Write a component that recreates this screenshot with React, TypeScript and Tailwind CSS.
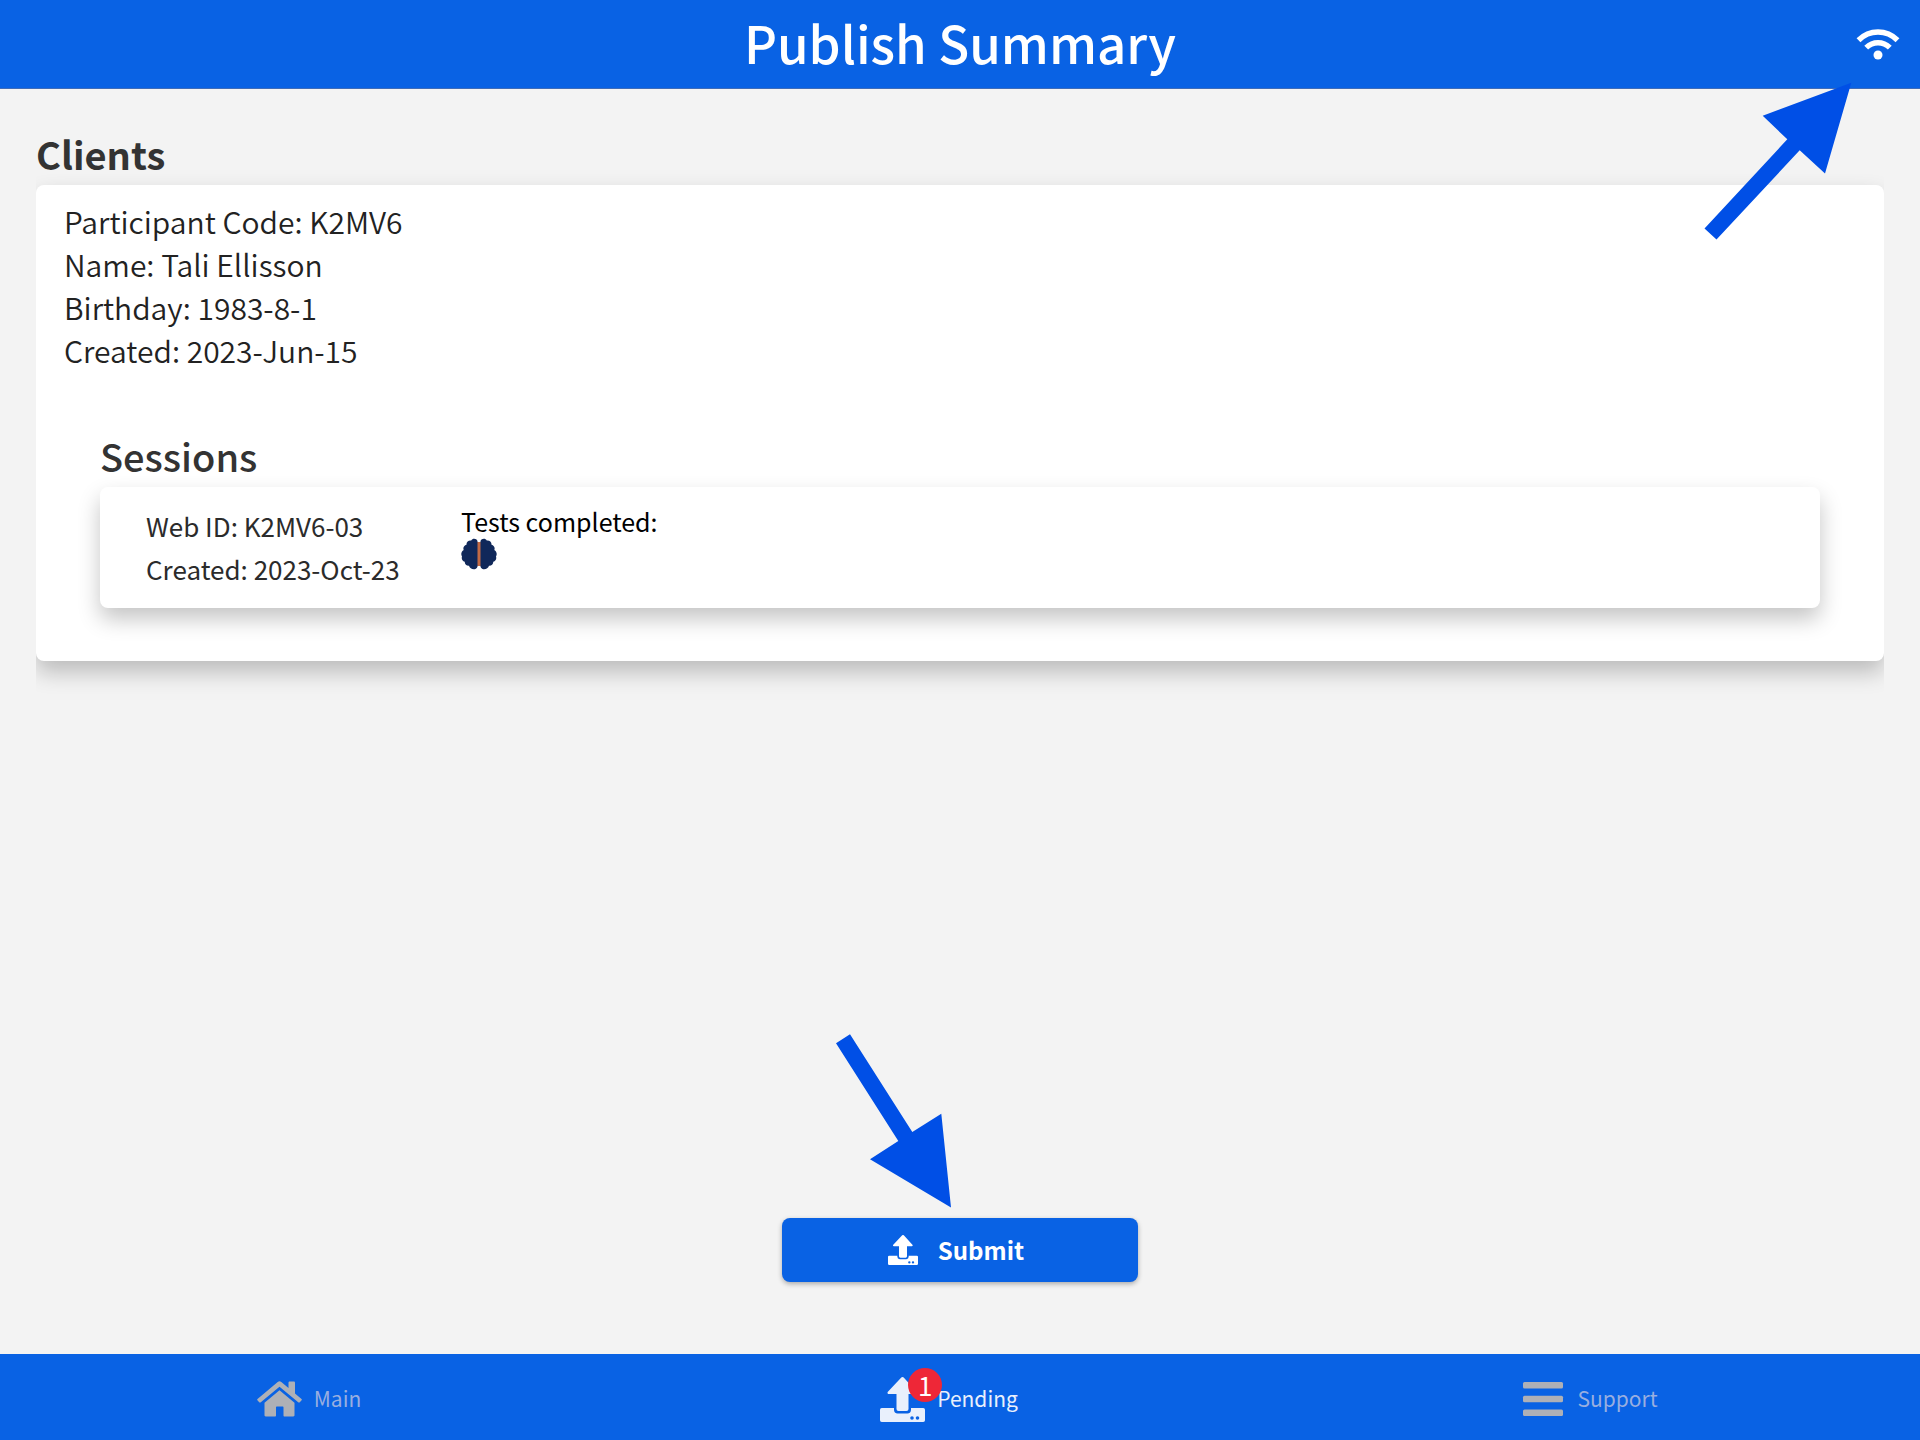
import React from "react";

interface Client {
  code: string;
  name: string;
  birthday: string;
  created: string;
}

interface Session {
  webId: string;
  created: string;
}

const CLIENT: Client = {
  code: "K2MV6",
  name: "Tali Ellisson",
  birthday: "1983-8-1",
  created: "2023-Jun-15",
};

const SESSIONS: Session[] = [{ webId: "K2MV6-03", created: "2023-Oct-23" }];

const cardShadow = "shadow-[0_11px_22px_rgba(0,0,0,0.23)]";

const WifiIcon = () => (
  <svg viewBox="0 0 44 32" className="w-11 h-8" fill="none" stroke="currentColor" strokeWidth="5.5" aria-hidden="true">
    <path d="M2.5 12.2C13.500 1.300 30.500 1.300 41.500 12.200" />
    <path d="M10.200 19.600C17 13 27 13 33.800 19.600" />
    <circle cx="22" cy="27" r="4.500" fill="currentColor" stroke="none" />
  </svg>
);

const UploadIcon = ({ className }: { className: string }) => (
  <svg viewBox="0 0 45 45" className={className} fill="currentColor" aria-hidden="true">
    <path d="M22.500 0a1.600 1.600 0 0 1 1.200.5L36.600 14.700c.9 1 .3 2.300-1 2.300H28.500V32a2 2 0 0 1-2 2h-8a2 2 0 0 1-2-2V17H8.900c-1.300 0-1.900-1.300-1-2.300L21.300.5A1.600 1.600 0 0 1 22.500 0Z" />
    <path
      fillRule="evenodd"
      d="M1.800 31H14v1.800a3.700 3.700 0 0 0 3.700 3.700h9.600a3.700 3.700 0 0 0 3.700-3.700V31h12.200A1.800 1.800 0 0 1 45 32.800v10.400a1.800 1.800 0 0 1-1.800 1.800H1.800A1.800 1.800 0 0 1 0 43.200V32.800A1.800 1.800 0 0 1 1.800 31ZM32 39.200a1.800 1.800 0 1 0 0 3.600 1.800 1.800 0 0 0 0-3.600Zm5.500 0a1.800 1.800 0 1 0 0 3.600 1.800 1.800 0 0 0 0-3.600Z"
    />
  </svg>
);

const HomeIcon = () => (
  <svg viewBox="0 0 45 36" className="w-[45px] h-9" fill="currentColor" aria-hidden="true">
    <path d="M20.700.9a2.800 2.800 0 0 1 3.600 0L31.500 7V1.700C31.500 1 32 .5 32.700.5h4.100c.7 0 1.200.5 1.200 1.200v10.800l6.500 5.400c.4.400.5.900.1 1.300l-1.800 2.100c-.4.400-.9.400-1.300.1L22.500 5.800 3.500 21.400c-.4.300-1 .3-1.300-.1L.4 19.200c-.4-.4-.3-1 .1-1.300Z" />
    <path d="M22.500 9.300 37.500 21.700V34.300c0 .7-.5 1.200-1.200 1.200H27.500c-.6 0-1-.4-1-1V26.500c0-.6-.4-1-1-1h-5.500c-.6 0-1 .4-1 1v8c0 .6-.4 1-1 1H8.700c-.7 0-1.200-.5-1.200-1.200V21.700Z" />
  </svg>
);

const MenuIcon = () => (
  <svg viewBox="0 0 45 36" className="w-[45px] h-9" fill="currentColor" aria-hidden="true">
    <rect x="3" y="1" width="40" height="6.500" rx="1.500" />
    <rect x="3" y="14.700" width="40" height="6.500" rx="1.500" />
    <rect x="3" y="28.500" width="40" height="6.500" rx="1.500" />
  </svg>
);

const BrainIcon = () => (
  <svg viewBox="0 0 36 32" className="w-9 h-8" aria-label="Brain test" role="img">
    <rect x="15.500" y="4" width="5" height="24" fill="#c26a45" />
    <path
      fill="#10285a"
      d="M16.500 3C15.500.2 11.500-.2 10.200 2.600 7.500 2.200 5.200 4.200 5.500 6.800 3 7.500 1.700 9.800 2.700 12 .3 13.500-.4 16.300 1 18.500c-.8 2.400.3 4.600 2.700 5.200.1 2.600 2 4.200 4.300 4C9 31.300 14.500 33.200 16.500 28.700Z"
    />
    <path
      fill="#10285a"
      d="M19.500 3C20.500.2 24.500-.2 25.800 2.600c2.700-.4 5 1.600 4.700 4.200 2.500.7 3.800 3 2.800 5.200 2.400 1.500 3.100 4.300 1.700 6.500.8 2.400-.3 4.600-2.700 5.200-.1 2.600-2 4.200-4.300 4C27 31.300 21.500 33.200 19.500 28.700Z"
    />
  </svg>
);

const SessionCard = ({ session }: { session: Session }) => (
  <article className={`flex rounded-lg bg-white pl-[46px] pt-[17px] pb-[18px] text-[#2b2b2b] ${cardShadow}`}>
    <div className="w-[315px] text-[26px] leading-[43px]">
      <p>Web ID: {session.webId}</p>
      <p>Created: {session.created}</p>
    </div>
    <div className="text-[25px] leading-[34px] text-black">
      <p>Tests completed:</p>
      <BrainIcon />
    </div>
  </article>
);

const App: React.FC = () => {
  return (
    <div className="relative flex min-h-screen flex-col overflow-hidden bg-[#f3f3f3] font-['Noto_Sans_CJK_SC','Noto_Sans',sans-serif]">
      <header className="relative flex h-[89px] items-center justify-center border-b border-[#3f6cb8] bg-[#0962e4] text-white">
        <h1 className="pb-1 text-[51px] font-medium leading-[72px]">Publish Summary</h1>
        <span className="absolute right-5 top-7">
          <WifiIcon />
        </span>
      </header>

      <main className="flex flex-1 flex-col">
        <section className="mx-9 overflow-hidden pt-[43px] pb-12">
          <h2 className="pb-2.5 text-[38px] font-bold leading-[43px] text-[#333]">Clients</h2>
          <div className={`rounded-lg bg-white pb-[53px] pt-[15px] ${cardShadow}`}>
            <div className="pl-7 text-[30px] font-[350] leading-[43px] text-[#222]">
              <p>Participant Code: {CLIENT.code}</p>
              <p>Name: {CLIENT.name}</p>
              <p>Birthday: {CLIENT.birthday}</p>
              <p>Created: {CLIENT.created}</p>
            </div>
            <div className="mx-16 pt-[61px]">
              <h3 className="pb-2 text-[38px] font-medium leading-[46px] text-[#333]">Sessions</h3>
              {SESSIONS.map((s) => (
                <SessionCard key={s.webId} session={s} />
              ))}
            </div>
          </div>
        </section>

        <div className="relative mx-auto mt-auto mb-[72px] w-[356px]">
          <button
            type="button"
            className="flex h-16 w-full items-center justify-center gap-5 rounded-lg bg-[#0962e4] pr-2 text-[24px] font-semibold text-white shadow-[0_2px_5px_rgba(0,0,0,0.3)]"
          >
            <UploadIcon className="h-[30px] w-[30px]" />
            Submit
          </button>
          {/* pointer to the submit button */}
          <svg
            viewBox="0 0 120 180"
            className="pointer-events-none absolute bottom-[70px] left-[50px] h-[180px] w-[120px]"
            aria-hidden="true"
          >
            <path fill="#004fe6" d="M119 175.500 109.300 81.700 80.300 100 18 2.300 4 11.300 66.300 109 38 127.300Z" />
          </svg>
        </div>
      </main>

      <nav className="grid h-[86px] grid-cols-3 bg-[#0962e4] pt-1 text-[21px]">
        <a href="#main" className="flex items-center justify-center gap-3 pr-[22px] text-[#98aee0]">
          <span className="text-[#aeb0b6]"><HomeIcon /></span>
          Main
        </a>
        <a href="#pending" className="flex items-center justify-center gap-3 pr-[22px] text-[#e9f0fc]">
          <span className="relative">
            <UploadIcon className="h-[45px] w-[45px]" />
            <span className="absolute -top-[9px] left-7 flex h-[34px] w-[34px] items-center justify-center rounded-full bg-[#ee2737] text-[26px] leading-none text-white">
              1
            </span>
          </span>
          Pending
        </a>
        <a href="#support" className="flex items-center justify-center gap-3 pr-[22px] text-[#98aee0]">
          <span className="text-[#aeb0b6]"><MenuIcon /></span>
          Support
        </a>
      </nav>

      {/* pointer to the connection indicator */}
      <svg
        viewBox="0 0 150 160"
        className="pointer-events-none absolute right-[67px] top-[81px] h-40 w-[150px]"
        aria-hidden="true"
      >
        <path fill="#004fe6" d="M148.300 1.700 59.700 34.700 84.300 58.300 1.500 147.500 13.500 158.500 96.700 69.300 122 92.500Z" />
      </svg>
    </div>
  );
};

export default App;
